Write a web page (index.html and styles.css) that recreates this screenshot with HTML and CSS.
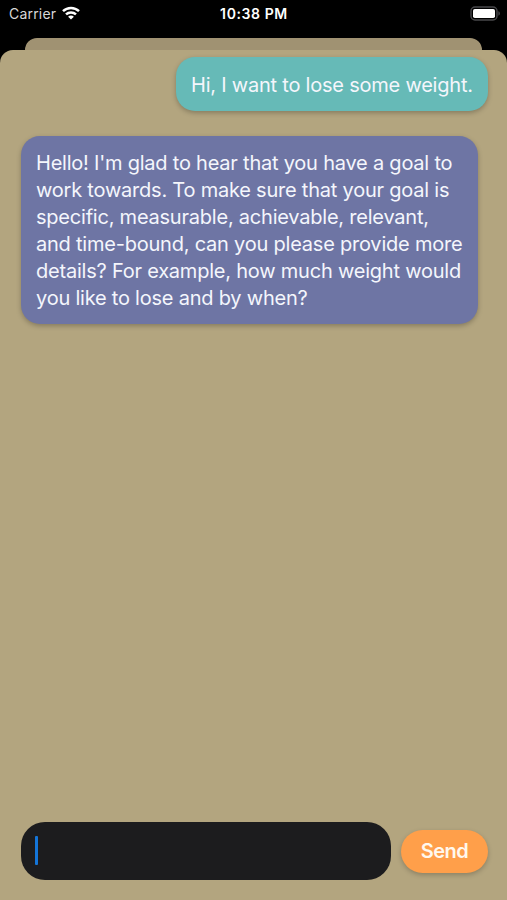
FILE: index.html
```html
<!DOCTYPE html>
<html lang="en">
<head>
    <meta charset="UTF-8">
    <meta name="viewport" content="width=device-width, initial-scale=1.0">
    <title>Chat</title>
    <link rel="stylesheet" href="styles.css">
</head>
<body>

    <header class="status-bar">
        <div class="carrier">
            <span>Carrier</span>
            <svg class="wifi" width="18" height="14" viewBox="0 0 18 14" fill="none" stroke="#fff" stroke-width="2.5">
                <path d="M1 5.2C5.5 .9 12.5 .9 17 5.2"/>
                <path d="M4 8.4C6.8 5.8 11.2 5.8 14 8.4"/>
                <path d="M9 13.6L6.1 10.7C7.8 9.2 10.2 9.2 11.9 10.7Z" fill="#fff" stroke="none"/>
            </svg>
        </div>
        <span class="time">10:38 PM</span>
        <svg class="battery" width="31" height="16" viewBox="0 0 31 16">
            <rect x="1" y="1" width="26" height="13" rx="4" fill="none" stroke="#48484b" stroke-width="1.4"/>
            <rect x="3" y="3" width="22" height="9" rx="1.8" fill="#fff"/>
            <path d="M28.4 5.3C30.4 6 30.4 9 28.4 9.7Z" fill="#48484b"/>
        </svg>
    </header>

    <div class="back-sheet"></div>

    <main class="sheet">
        <div class="messages">
            <div class="bubble user">Hi, I want to lose some weight.</div>
            <div class="bubble bot">Hello! I'm glad to hear that you have a goal to<br>work towards. To make sure that your goal is<br>specific, measurable, achievable, relevant,<br>and time-bound, can you please provide more<br>details? For example, how much weight would<br>you like to lose and by when?</div>
        </div>

        <div class="composer">
            <div class="message-input"><span class="caret"></span></div>
            <button class="send-button">Send</button>
        </div>
    </main>

</body>
</html>
```

FILE: styles.css
```css
* {
    box-sizing: border-box;
}

body {
    display: flex;
    flex-direction: column;
    height: 900px;
    margin: 0;
    overflow: hidden;
    background-color: #000;
    color: #f4f6fc;
    font-family: Inter, "Liberation Sans", sans-serif;
}

.status-bar {
    display: grid;
    grid-template-columns: 1fr auto 1fr;
    align-items: center;
    flex: none;
    height: 38px;
    padding: 0 6px 11px 9px;
    font-size: 14px;
}

.carrier {
    display: flex;
    align-items: center;
    gap: 6px;
    color: #d8d8d8;
    letter-spacing: 0.2px;
}

.wifi {
    margin-top: -2px;
}

.time {
    margin-right: 2px;
    color: #fff;
    font-weight: 600;
    letter-spacing: 0.6px;
}

.battery {
    justify-self: end;
}

.back-sheet {
    flex: none;
    height: 12px;
    margin: 0 25px;
    border-radius: 12px 12px 0 0;
    background-color: #a09272;
}

.sheet {
    display: flex;
    flex: 1;
    flex-direction: column;
    justify-content: space-between;
    padding: 7px 19px 20px 21px;
    border-radius: 13px 13px 0 0;
    background-color: #b3a57f;
}

.messages {
    display: flex;
    flex-direction: column;
    gap: 25px;
}

.bubble {
    padding: 14px 15px 12px;
    border-radius: 19px;
    box-shadow: 0 2px 5px rgba(0, 0, 0, 0.25);
    font-size: 20px;
    line-height: 27px;
    letter-spacing: -0.22px;
    white-space: nowrap;
}

.user {
    align-self: flex-end;
    width: 312px;
    height: 54px;
    padding-top: 15px;
    background-color: #66bab7;
}

.bot {
    width: 457px;
    height: 188px;
    background-color: #6e75a4;
}

.composer {
    display: flex;
    align-items: center;
    justify-content: space-between;
}

.message-input {
    display: flex;
    align-items: center;
    width: 370px;
    height: 58px;
    padding: 0 14px 2px;
    border-radius: 24px;
    background-color: #1c1c1e;
}

.caret {
    width: 3px;
    height: 29px;
    border-radius: 1px;
    background-color: #1475d8;
}

.send-button {
    width: 87px;
    height: 43px;
    padding: 0;
    border: none;
    border-radius: 22px;
    background-color: #ff9f4a;
    box-shadow: 0 2px 5px rgba(0, 0, 0, 0.22);
    color: #fff8ee;
    font-family: inherit;
    font-size: 20px;
    font-weight: 600;
    letter-spacing: -0.5px;
}
```
